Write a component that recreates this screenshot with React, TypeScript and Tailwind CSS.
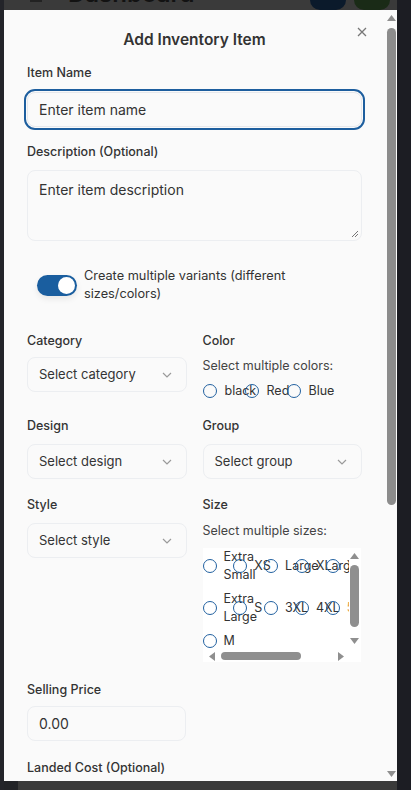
import React from "react";

const Radio = () => (
  <span className="block w-[14px] h-[14px] shrink-0 rounded-full border-[1.5px] border-[#2261a0]" />
);

const Chevron = () => (
  <svg width="10" height="6" viewBox="0 0 10 6" className="shrink-0">
    <path d="M1 1l4 4 4-4" fill="none" stroke="#9a9a9a" strokeWidth="1.2" />
  </svg>
);

const Select = ({ text }: { text: string }) => (
  <div className="h-[35px] rounded-[8px] border border-[#eceef1] bg-[#fafafa] flex items-center justify-between pl-[11px] pr-[14px] text-[13px] text-[#343434]">
    <span>{text}</span>
    <Chevron />
  </div>
);

const Label = ({ children }: { children: React.ReactNode }) => (
  <div className="h-[20px] leading-[20px] text-[12.5px] font-medium text-[#333333]">{children}</div>
);

const Up = () => (
  <svg width="9" height="6" viewBox="0 0 9 6"><path d="M4.5 0L9 6H0z" fill="#8f8f8f" /></svg>
);
const Down = () => (
  <svg width="9" height="6" viewBox="0 0 9 6"><path d="M0 0h9L4.5 6z" fill="#8f8f8f" /></svg>
);
const Left = () => (
  <svg width="6" height="9" viewBox="0 0 6 9"><path d="M6 0v9L0 4.5z" fill="#8f8f8f" /></svg>
);
const Right = () => (
  <svg width="6" height="9" viewBox="0 0 6 9"><path d="M0 0l6 4.5L0 9z" fill="#8f8f8f" /></svg>
);

const sizes: { t: string; c?: string }[] = [
  { t: "Extra Small" },
  { t: "XS" },
  { t: "Large" },
  { t: "XLarge" },
  { t: "XXL" },
  { t: "Small" },
  { t: "2XL" },
  { t: "Extra Large" },
  { t: "S" },
  { t: "3XL" },
  { t: "4XL" },
  { t: "5XL", c: "text-[#e39a45]" },
  { t: "6XL" },
  { t: "Free" },
  { t: "M" },
];

export default function App() {
  return (
    <div className="w-[411px] h-[790px] flex overflow-hidden bg-[#1c1d23] font-['Inter',sans-serif]">
      <div className="w-[4px] h-full bg-[#232429]" />
      <div className="w-[393px] h-full flex flex-col">
        {/* background page header */}
        <div className="h-[10px] bg-[#3a3a3a] overflow-hidden flex items-end relative">
          <div className="ml-[26px] w-[12px] h-[2px] bg-[#222] self-start" />
          <div className="ml-[26px] -mt-[20px] self-start text-[24px] leading-[28px] font-semibold text-[#121212] whitespace-nowrap">
            Dashboard
          </div>
          <div className="ml-auto flex gap-[8px] mr-[7px] self-end">
            <div className="w-[36px] h-[36px] rounded-[10px] bg-[#0b1a2b]" />
            <div className="w-[36px] h-[36px] rounded-[10px] bg-[#1a2b17]" />
          </div>
        </div>

        {/* modal */}
        <div className="h-[771px] bg-[#fafafa] flex">
          <div className="w-[381px] relative overflow-hidden px-[23px] pt-[18px]">
            <svg width="10" height="10" viewBox="0 0 10 10" className="absolute top-[17px] right-[18px]">
              <path d="M1 1l8 8M9 1l-8 8" stroke="#777" strokeWidth="1.3" />
            </svg>
            <div className="text-center text-[15.5px] leading-[24px] font-semibold text-[#333333]">Add Inventory Item</div>

            <div className="mt-[11px]">
              <Label>Item Name</Label>
            </div>
            <div className="mt-[9px] h-[35px] rounded-[8px] border border-[#e6e8ec] bg-[#fafafa] outline-2 outline-offset-1 outline-[#1d5e9e] flex items-center px-[11px] text-[14px] text-[#333333]">
              Enter item name
            </div>

            <div className="mt-[15px]">
              <Label>Description (Optional)</Label>
            </div>
            <div className="mt-[8px] h-[71px] relative rounded-[8px] border border-[#eceef1] bg-[#fafafa] px-[11px] pt-[9px] text-[14px] leading-[20px] text-[#333333]">
              Enter item description
              <svg width="8" height="8" viewBox="0 0 8 8" className="absolute right-[2px] bottom-[2px]">
                <path d="M7 1L1 7M7 4L4 7" stroke="#777" strokeWidth="1" />
              </svg>
            </div>

            <div className="mt-[26px] pl-[10px] flex items-center">
              <div className="w-[40px] h-[21px] rounded-full bg-[#1a5e9f] flex items-center justify-end pr-[2px] shadow-[0_3px_6px_rgba(0,0,0,0.08)]">
                <div className="w-[17px] h-[17px] rounded-full bg-white" />
              </div>
              <div className="ml-[7px] w-[226px] text-[12.75px] leading-[18px] text-[#333333]">
                Create multiple variants (different sizes/colors)
              </div>
            </div>

            {/* Category / Color */}
            <div className="mt-[28px] grid grid-cols-2 gap-x-[16px]">
              <div>
                <Label>Category</Label>
                <div className="mt-[6px]">
                  <Select text="Select category" />
                </div>
              </div>
              <div>
                <Label>Color</Label>
                <div className="mt-[5px] h-[20px] leading-[20px] text-[12.5px] text-[#444444]">Select multiple colors:</div>
                <div className="mt-[5px] h-[20px] flex items-center text-[12.5px] text-[#333333]">
                  {["black", "Red", "Blue"].map((c) => (
                    <div key={c} className="w-[42px] shrink-0 flex items-center">
                      <Radio />
                      <span className="ml-[8px] whitespace-nowrap">{c}</span>
                    </div>
                  ))}
                </div>
              </div>
            </div>

            {/* Design / Group */}
            <div className="mt-[15px] grid grid-cols-2 gap-x-[16px]">
              <div>
                <Label>Design</Label>
                <div className="mt-[8px]">
                  <Select text="Select design" />
                </div>
              </div>
              <div>
                <Label>Group</Label>
                <div className="mt-[8px]">
                  <Select text="Select group" />
                </div>
              </div>
            </div>

            {/* Style / Size */}
            <div className="mt-[16px] grid grid-cols-2 gap-x-[16px]">
              <div>
                <Label>Style</Label>
                <div className="mt-[8px]">
                  <Select text="Select style" />
                </div>
              </div>
              <div>
                <Label>Size</Label>
                <div className="mt-[6px] h-[20px] leading-[20px] text-[12.5px] text-[#444444]">Select multiple sizes:</div>
                <div className="mt-[7px] h-[114px] w-[158px] flex flex-col bg-white">
                  <div className="flex flex-1 min-h-0">
                    <div className="flex-1 overflow-hidden">
                      <div className="grid grid-cols-[repeat(7,30.8px)] gap-y-[6px] w-max text-[12.5px] leading-[18px] text-[#333333]">
                        {sizes.map((s, i) => (
                          <div key={i} className="w-[30.8px] flex items-center">
                            <Radio />
                            <span className={"ml-[7px] " + (s.c ?? "")}>{s.t}</span>
                          </div>
                        ))}
                      </div>
                    </div>
                    <div className="w-[12px] flex flex-col items-center pt-[5px] pb-[6px]">
                      <Up />
                      <div className="mt-[6px] w-[9px] h-[62px] rounded-full bg-[#8f8f8f]" />
                      <div className="flex-1" />
                      <Down />
                    </div>
                  </div>
                  <div className="h-[12px] w-[146px] flex items-center pl-[6px] pr-[5px]">
                    <Left />
                    <div className="ml-[6px] w-[80px] h-[8px] rounded-full bg-[#8f8f8f]" />
                    <div className="flex-1" />
                    <Right />
                  </div>
                </div>
              </div>
            </div>

            <div className="mt-[18px]">
              <Label>Selling Price</Label>
            </div>
            <div className="mt-[6px] w-[159px] h-[35px] rounded-[8px] border border-[#eceef1] bg-[#fafafa] flex items-center px-[11px] text-[14px] text-[#333333]">
              0.00
            </div>

            <div className="mt-[17px]">
              <Label>Landed Cost (Optional)</Label>
            </div>
          </div>

          {/* modal scrollbar */}
          <div className="w-[12px] flex flex-col items-center pt-[5px] pb-[4px]">
            <Up />
            <div className="mt-[7px] w-[9px] h-[477px] rounded-full bg-[#8c8c8c]" />
            <div className="flex-1" />
            <Down />
          </div>
        </div>

        <div className="h-[9px] bg-[#3a3a3a] flex">
          <div className="w-[14px] h-full bg-[#222327]" />
        </div>
      </div>
      <div className="flex-1 h-full bg-[#1c1d23]" />
    </div>
  );
}
